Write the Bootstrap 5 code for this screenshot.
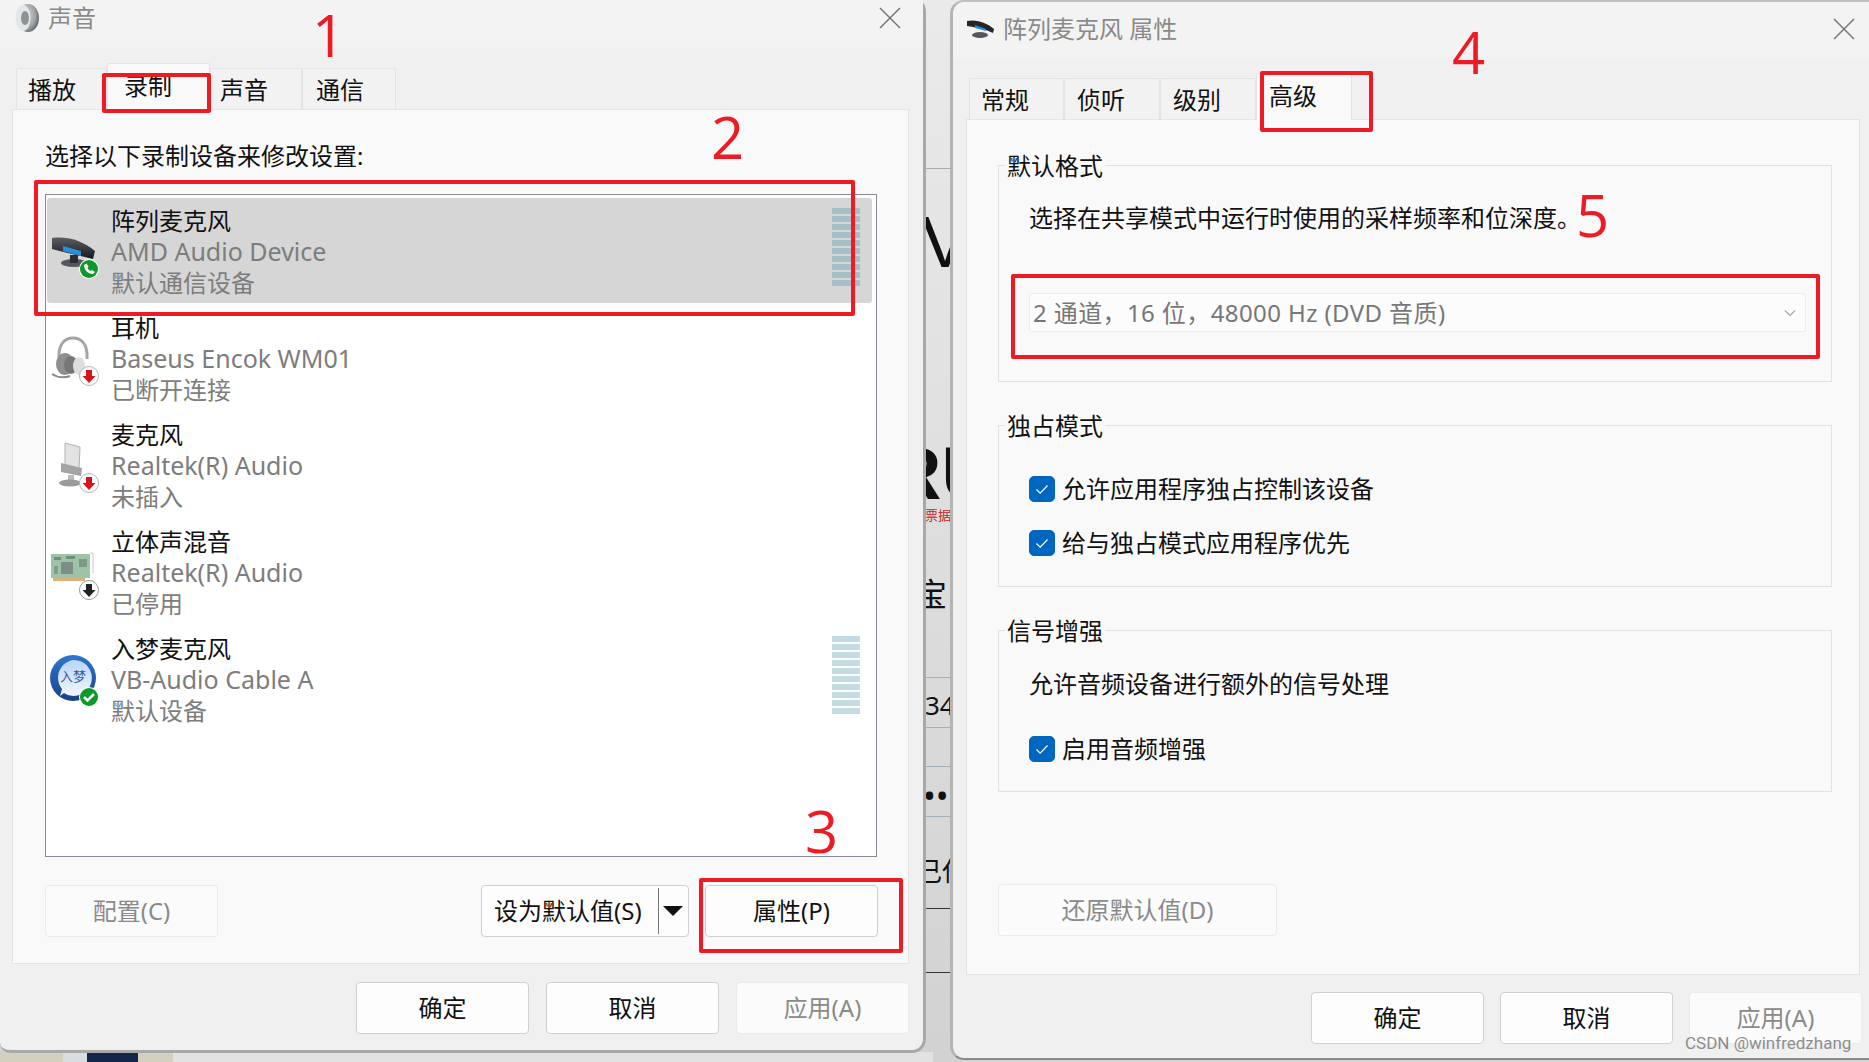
<!doctype html>
<html lang="zh-CN">
<head>
<meta charset="utf-8">
<title>声音</title>
<link href="https://cdn.jsdelivr.net/npm/bootstrap@5.3.0/dist/css/bootstrap.min.css" rel="stylesheet">
<style>
html,body{margin:0;height:100%;}
body{width:1869px;height:1062px;overflow:hidden;position:relative;background:#dfdfdf;font-family:"Noto Sans","Noto Sans CJK SC",sans-serif;font-size:24px;line-height:32px;color:#111;}
/* desktop behind the windows */
.snd-desk{position:absolute;inset:0;overflow:hidden;background:linear-gradient(#eaeaea,#d2d2d2);}
.snd-frag{position:absolute;white-space:nowrap;color:#111;}
.snd-rule{position:absolute;left:925px;width:26px;height:1px;background:#9fb0bb;}
.snd-rule-dark{background:#333;}
.snd-floor{position:absolute;top:1052px;height:10px;}
/* windows */
.snd-win{position:absolute;top:0;display:flex;flex-direction:column;background:#f0f0f0;}
.snd-win-a{left:0;width:926px;height:1053px;border-right:3px solid #a8a8a8;border-bottom:3px solid #a8a8a8;border-radius:0 10px 14px 10px;}
.snd-win-b{left:950px;width:919px;height:1060px;border-left:3px solid #b4b4b4;border-top:2px solid #c0c0c0;border-bottom:2px solid #8a8a8a;border-radius:14px 0 0 14px;}
.snd-head{flex:none;display:flex;align-items:center;background:#f3f3f3;color:#8a8a8a;}
.snd-win-a .snd-head{height:48px;padding:0 22px 12px 14px;}
.snd-win-b .snd-head{height:55px;padding:0 14px 2px 13px;border-top-left-radius:12px;}
.snd-close{margin-left:auto;}
/* tabs */
.snd-tabs{flex:none;border:0;align-items:flex-end;position:relative;z-index:1;}
.snd-win-a .snd-tabs{padding:15px 0 0 16px;}
.snd-win-b .snd-tabs{padding:16px 0 0 16px;}
.snd-tabs .nav-link{display:block;height:41px;line-height:41px;padding:0;color:#111;font-size:24px;background:#f2f2f2;border:1px solid #e4e4e4;border-bottom:0;border-radius:2px 2px 0 0;margin:0;}
.snd-tabs .nav-link.active{height:47px;line-height:44px;margin-bottom:-1px;background:#f9f9f9;color:#111;border-color:#e4e4e4;}
.snd-win-a .nav-item:nth-child(1) .nav-link{width:91px;padding-left:11px;}
.snd-win-a .nav-item:nth-child(2) .nav-link{width:103px;padding-left:16px;}
.snd-win-a .nav-item:nth-child(3) .nav-link{width:92px;padding-left:9px;}
.snd-win-a .nav-item:nth-child(4) .nav-link{width:94px;padding-left:13px;}
.snd-win-b .nav-item:nth-child(1) .nav-link{width:95px;padding-left:11px;}
.snd-win-b .nav-item:nth-child(2) .nav-link{width:96px;padding-left:12px;}
.snd-win-b .nav-item:nth-child(3) .nav-link{width:96px;padding-left:12px;}
.snd-win-b .nav-item:nth-child(4) .nav-link{width:96px;padding-left:12px;}
/* panels */
.snd-panel{background:#f9f9f9;border:1px solid #e4e4e4;}
.snd-panel-a{margin:0 14px 0 12px;height:855px;padding:30px 0 0 32px;}
.snd-panel-b{margin:0 9px 0 13px;height:856px;padding:45px 0 0 31px;}
.snd-prompt{height:32px;margin-bottom:22px;}
.snd-listbox{width:832px;height:663px;background:#fff;border:1px solid #8b8b97;border-radius:0;padding:3px 4px 0 1px;gap:2px;overflow:visible;}
.snd-item{height:105px;display:flex;padding:0 0 0 3px;border:0;background:transparent;border-radius:3px!important;margin:0;color:#111;}
.snd-item.active{background:#d6d6d6;color:#111;}
.snd-item svg.snd-ico{flex:none;width:54px;height:60px;margin:30px 7px 0 0;overflow:visible;}
.snd-lines{padding-top:7px;}
.snd-lines div{line-height:32px;height:32px;white-space:nowrap;}
.snd-lines div+div{color:#7d7d7d;}
.snd-lines div:nth-child(2){height:30px;line-height:28px;font-size:25px;}
.snd-meter{margin:10px 12px 0 auto;width:28px;height:78px;display:flex;flex-direction:column;gap:2px;}
.snd-meter i{display:block;flex:1;background:#c3dbe2;}
.snd-item.active .snd-meter i{background:#a7bfc6;}
/* buttons */
.snd-btn{font-size:24px;line-height:32px;height:52px;padding:0;border:1px solid #d0d0d0;border-radius:4px;background:#fdfdfd;color:#111;text-align:center;}
.snd-btn:disabled,.snd-btn.disabled{background:#fbfbfb;border-color:#ebebeb;color:#8a8a8a;opacity:1;}
.snd-w173{width:173px;}
.snd-cfg{margin-top:28px;padding-right:30px;}
.snd-split{width:208px;display:flex;align-items:center;padding:0 0 0 12px;}
.snd-split-bar{width:1px;height:46px;background:#777;margin-left:auto;}
.snd-caret{width:0;height:0;border-left:10px solid transparent;border-right:10px solid transparent;border-top:10px solid #111;margin:0 5px 0 4px;}
.snd-foot{flex:none;}
.snd-win-a .snd-foot{padding:18px 14px 0 0;gap:17px;}
.snd-win-b .snd-foot{padding:17px 7px 0 0;gap:16px;}
/* group boxes */
.snd-group{width:834px;border:1px solid #e2e2e2;padding:0 0 0 30px;margin-bottom:43px;}
.snd-gh1{height:217px;}
.snd-gh2{height:162px;}
.snd-legend{display:block;width:max-content;height:32px;margin:-16px 0 0 -24px;padding:0 2px;background:#f9f9f9;}
.snd-para{height:32px;margin-top:20px;white-space:nowrap;}
.snd-para-b{margin-top:21px;}
.snd-select{width:777px;height:39px;margin-top:59px;padding:0 0 0 3px;font-size:24px;line-height:37px;letter-spacing:.4px;color:#777;background-color:#fcfcfc;border:1px solid #ececec;border-radius:3px;background-position:right 8px center;background-size:14px 14px;background-image:url("data:image/svg+xml,%3csvg xmlns='http://www.w3.org/2000/svg' viewBox='0 0 14 14'%3e%3cpath fill='none' stroke='%23666' d='M2 4.500l5 5 5-5'/%3e%3c/svg%3e");}
.snd-check{margin:0;padding:0;min-height:0;display:flex;align-items:center;gap:7px;height:32px;}
.snd-check-a{margin-top:31px;}
.snd-check-b{margin-top:22px;}
.snd-check-c{margin-top:33px;}
.snd-check .form-check-input:checked{width:26px;height:26px;margin:0;float:none;flex:none;border-radius:5px;background-color:#0067c0;border-color:#0067c0;background-size:18px 18px;background-image:url("data:image/svg+xml,%3csvg xmlns='http://www.w3.org/2000/svg' viewBox='0 0 18 18'%3e%3cpath fill='none' stroke='%23fff' stroke-width='1.200' d='M3.500 9.500l3.700 3.600 7.300-7.600'/%3e%3c/svg%3e");}
.snd-check .form-check-label{color:#111;}
.snd-reset{width:279px;margin-top:92px;}
/* annotations */
.snd-box{position:absolute;border:4px solid #ed1c24;border-radius:2px;z-index:5;pointer-events:none;}
.snd-num{position:absolute;z-index:5;color:#ed1c24;font-family:"Open Sans",sans-serif;font-size:58px;line-height:58px;}
.snd-mark{position:absolute;z-index:6;left:1685px;top:1033px;font-family:"Roboto",sans-serif;font-size:17px;line-height:20px;color:#8d8d8d;white-space:nowrap;}
</style>
</head>
<body>
<div class="snd-desk">
  <div class="snd-frag" style="left:921px;top:206px;font-family:'Liberation Sans';font-size:72px;line-height:72px;">V</div>
  <div class="snd-rule" style="top:168px;background:#aaa;"></div>
  <div class="snd-frag" style="left:888px;top:444px;font-family:'Liberation Sans';font-weight:700;font-size:74px;line-height:60px;">RU</div>
  <div class="snd-frag" style="left:925px;top:508px;font-size:13px;line-height:14px;color:#c4262e;font-family:'Noto Sans CJK SC';">票据</div>
  <div class="snd-frag" style="left:915px;top:574px;font-family:'Noto Sans CJK SC';font-size:32px;line-height:36px;">宝</div>
  <div class="snd-rule" style="top:677px;"></div>
  <div class="snd-frag" style="left:925px;top:689px;font-size:26px;">34</div>
  <div class="snd-rule" style="top:727px;"></div>
  <div class="snd-rule" style="top:766px;"></div>
  <div class="snd-frag" style="left:923px;top:775px;font-size:34px;line-height:40px;">••</div>
  <div class="snd-rule" style="top:816px;"></div>
  <div class="snd-frag" style="left:916px;top:854px;font-family:'Noto Sans CJK SC';font-size:26px;">己任</div>
  <div class="snd-rule snd-rule-dark" style="top:908px;"></div>
  <div class="snd-rule snd-rule-dark" style="top:972px;"></div>
  <div class="snd-floor" style="left:0;width:63px;background:#d3d0c0;"></div>
  <div class="snd-floor" style="left:63px;width:24px;background:#d8dde0;"></div>
  <div class="snd-floor" style="left:87px;width:51px;background:#14264a;"></div>
  <div class="snd-floor" style="left:138px;width:35px;background:#d3d0c0;"></div>
  <div class="snd-floor" style="left:173px;width:760px;background:#e2e2e2;"></div>
</div>

<!-- left window -->
<div class="snd-win snd-win-a">
  <div class="snd-head">
    <svg width="26" height="30" viewBox="0 0 26 30" class="me-2"><defs><radialGradient id="spk" cx=".35" cy=".4" r=".8"><stop offset="0" stop-color="#dfe3e5"/><stop offset=".6" stop-color="#9ea3a6"/><stop offset="1" stop-color="#3c3f42"/></radialGradient></defs><ellipse cx="14" cy="15" rx="11" ry="14" fill="url(#spk)"/><ellipse cx="9" cy="15" rx="7.500" ry="13" fill="#e4e7e9"/><ellipse cx="11" cy="15" rx="4" ry="7" fill="#8d9295"/></svg>
    <span>声音</span>
    <svg class="snd-close" width="22" height="22" viewBox="0 0 22 22"><path d="M1 1l20 20M21 1L1 21" stroke="#777" stroke-width="1.500" fill="none"/></svg>
  </div>
  <ul class="nav nav-tabs snd-tabs">
    <li class="nav-item"><a class="nav-link" href="#">播放</a></li>
    <li class="nav-item"><a class="nav-link active" href="#">录制</a></li>
    <li class="nav-item"><a class="nav-link" href="#">声音</a></li>
    <li class="nav-item"><a class="nav-link" href="#">通信</a></li>
  </ul>
  <div class="snd-panel snd-panel-a">
    <div class="snd-prompt">选择以下录制设备来修改设置:</div>
    <div class="list-group snd-listbox">
      <div class="list-group-item snd-item active">
        <svg class="snd-ico" viewBox="0 0 54 60"><defs><linearGradient id="cam" x1="0" y1="0" x2="0" y2="1"><stop offset="0" stop-color="#5a5e63"/><stop offset="1" stop-color="#16181b"/></linearGradient></defs><ellipse cx="24" cy="35" rx="13" ry="4" fill="#55585c"/><rect x="20" y="27" width="8" height="8" fill="#2b2d30"/><path d="M2 10c14-2 30 2 43 13l-2 8C30 28 14 24 2 21z" fill="url(#cam)"/><path d="M13 18l18 5v5l-18-5z" fill="#2a8fd8"/><circle cx="39" cy="41" r="10" fill="#fff"/><circle cx="39" cy="41" r="9" fill="#0a9a2a"/><path d="M34 37c0 5 4 9 9 9l2-2-3-2-1.500 1c-1.500-.8-2.500-1.800-3-3l1-1.500-2-3z" fill="#fff"/></svg>
        <div class="snd-lines"><div>阵列麦克风</div><div>AMD Audio Device</div><div>默认通信设备</div></div>
        <div class="snd-meter"><i></i><i></i><i></i><i></i><i></i><i></i><i></i><i></i><i></i><i></i></div>
      </div>
      <div class="list-group-item snd-item">
        <svg class="snd-ico" viewBox="0 0 54 60"><path d="M9 24C8 10 14 3 23 3s15 7 14 21" fill="none" stroke="#a5a5a5" stroke-width="3"/><ellipse cx="15" cy="29" rx="9" ry="11" fill="#8f8f8f"/><ellipse cx="21" cy="30" rx="7" ry="9" fill="#777"/><ellipse cx="29" cy="31" rx="6" ry="9" fill="#dedede"/><path d="M2 39c6 4 12 4 18 2" fill="none" stroke="#888" stroke-width="2"/><circle cx="39" cy="41" r="9.500" fill="#fff" stroke="#b5b5b5"/><path d="M36 35h6v6h3.500L39 48l-6.500-7H36z" fill="#d8131b"/></svg>
        <div class="snd-lines"><div>耳机</div><div>Baseus Encok WM01</div><div>已断开连接</div></div>
      </div>
      <div class="list-group-item snd-item">
        <svg class="snd-ico" viewBox="0 0 54 60"><path d="M15 1l15 4-1 23-14-3z" fill="#e3e3e3" stroke="#b3b3b3"/><path d="M11 21l21 5-1 8-20-4z" fill="#a4a4a4"/><rect x="18" y="33" width="6" height="6" fill="#bdbdbd"/><ellipse cx="20" cy="41" rx="11" ry="3.500" fill="#9a9a9a"/><circle cx="39" cy="41" r="9.500" fill="#fff" stroke="#b5b5b5"/><path d="M36 35h6v6h3.500L39 48l-6.500-7H36z" fill="#d8131b"/></svg>
        <div class="snd-lines"><div>麦克风</div><div>Realtek(R) Audio</div><div>未插入</div></div>
      </div>
      <div class="list-group-item snd-item">
        <svg class="snd-ico" viewBox="0 0 54 60"><path d="M40 4h3v20" fill="none" stroke="#c8c8c8"/><rect x="1" y="5" width="39" height="24" fill="#9fc3a6"/><rect x="11" y="13" width="12" height="12" fill="#7d8f85"/><rect x="4" y="8" width="7" height="3" fill="#6f8f78"/><rect x="16" y="7" width="9" height="3" fill="#6f8f78"/><rect x="29" y="10" width="8" height="8" fill="#7d9a86"/><rect x="4" y="17" width="4" height="8" fill="#7f9f88"/><rect x="3" y="29" width="32" height="3" fill="#d9b07e"/><circle cx="39" cy="41" r="9.500" fill="#fff" stroke="#9a9a9a"/><path d="M36 35h6v6h3.500L39 48l-6.500-7H36z" fill="#222"/></svg>
        <div class="snd-lines"><div>立体声混音</div><div>Realtek(R) Audio</div><div>已停用</div></div>
      </div>
      <div class="list-group-item snd-item">
        <svg class="snd-ico" viewBox="0 0 54 60"><defs><linearGradient id="ring" x1="0" y1="0" x2="0" y2="1"><stop offset="0" stop-color="#2d78cf"/><stop offset="1" stop-color="#1c3f8a"/></linearGradient><linearGradient id="bub" x1="0" y1="0" x2="0" y2="1"><stop offset="0" stop-color="#b8d4f5"/><stop offset="1" stop-color="#f2f7fd"/></linearGradient></defs><circle cx="23" cy="22" r="23" fill="url(#ring)"/><path d="M23 4a18 18 0 1 1-9 33l-4 3 2-7A18 18 0 0 1 23 4z" fill="url(#bub)"/><text x="23" y="25" text-anchor="middle" font-family="Noto Sans CJK SC" font-size="13" fill="#2d5aa0">入梦</text><circle cx="39" cy="41" r="10" fill="#fff"/><circle cx="39" cy="41" r="9" fill="#0a9a2a"/><path d="M34 41l3.500 3.500 6.500-6.500" fill="none" stroke="#fff" stroke-width="2.500"/></svg>
        <div class="snd-lines"><div>入梦麦克风</div><div>VB-Audio Cable A</div><div>默认设备</div></div>
        <div class="snd-meter"><i></i><i></i><i></i><i></i><i></i><i></i><i></i><i></i><i></i><i></i></div>
      </div>
    </div>
    <div class="d-flex snd-cfg">
      <button class="btn snd-btn snd-w173" disabled>配置(C)</button>
      <div class="btn snd-btn snd-split ms-auto"><span>设为默认值(S)</span><span class="snd-split-bar"></span><span class="snd-caret"></span></div>
      <button class="btn snd-btn snd-w173 ms-3">属性(P)</button>
    </div>
  </div>
  <div class="d-flex justify-content-end snd-foot">
    <button class="btn snd-btn snd-w173">确定</button>
    <button class="btn snd-btn snd-w173">取消</button>
    <button class="btn snd-btn snd-w173" disabled>应用(A)</button>
  </div>
</div>

<!-- right window -->
<div class="snd-win snd-win-b">
  <div class="snd-head">
    <svg width="29" height="22" viewBox="0 0 29 22" class="me-2"><path d="M1 3c10-2 20 2 27 8l-1 4C19 11 9 9 1 8z" fill="#23262a"/><path d="M9 7l11 4v2L9 10z" fill="#2a8fd8"/><ellipse cx="14" cy="17" rx="8" ry="3" fill="#55585c"/></svg>
    <span>阵列麦克风 属性</span>
    <svg class="snd-close" width="22" height="22" viewBox="0 0 22 22"><path d="M1 1l20 20M21 1L1 21" stroke="#777" stroke-width="1.500" fill="none"/></svg>
  </div>
  <ul class="nav nav-tabs snd-tabs">
    <li class="nav-item"><a class="nav-link" href="#">常规</a></li>
    <li class="nav-item"><a class="nav-link" href="#">侦听</a></li>
    <li class="nav-item"><a class="nav-link" href="#">级别</a></li>
    <li class="nav-item"><a class="nav-link active" href="#">高级</a></li>
  </ul>
  <div class="snd-panel snd-panel-b">
    <div class="snd-group snd-gh1">
      <span class="snd-legend">默认格式</span>
      <div class="snd-para">选择在共享模式中运行时使用的采样频率和位深度。</div>
      <select class="form-select snd-select"><option>2 通道，16 位，48000 Hz (DVD 音质)</option></select>
    </div>
    <div class="snd-group snd-gh2">
      <span class="snd-legend">独占模式</span>
      <div class="form-check snd-check snd-check-a"><input class="form-check-input" type="checkbox" checked id="c1"><label class="form-check-label" for="c1">允许应用程序独占控制该设备</label></div>
      <div class="form-check snd-check snd-check-b"><input class="form-check-input" type="checkbox" checked id="c2"><label class="form-check-label" for="c2">给与独占模式应用程序优先</label></div>
    </div>
    <div class="snd-group snd-gh2 mb-0">
      <span class="snd-legend">信号增强</span>
      <div class="snd-para snd-para-b">允许音频设备进行额外的信号处理</div>
      <div class="form-check snd-check snd-check-c"><input class="form-check-input" type="checkbox" checked id="c3"><label class="form-check-label" for="c3">启用音频增强</label></div>
    </div>
    <button class="btn snd-btn snd-reset d-block" disabled>还原默认值(D)</button>
  </div>
  <div class="d-flex justify-content-end snd-foot">
    <button class="btn snd-btn snd-w173">确定</button>
    <button class="btn snd-btn snd-w173">取消</button>
    <button class="btn snd-btn snd-w173" disabled>应用(A)</button>
  </div>
</div>

<!-- red annotations -->
<div class="snd-box" style="left:102px;top:73px;width:109px;height:40px;"></div>
<div class="snd-box" style="left:34px;top:180px;width:821px;height:136px;"></div>
<div class="snd-box" style="left:699px;top:878px;width:204px;height:75px;"></div>
<div class="snd-box" style="left:1260px;top:71px;width:113px;height:61px;"></div>
<div class="snd-box" style="left:1011px;top:274px;width:809px;height:85px;"></div>
<div class="snd-num" style="left:312px;top:6px;">1</div>
<div class="snd-num" style="left:711px;top:108px;">2</div>
<div class="snd-num" style="left:805px;top:802px;">3</div>
<div class="snd-num" style="left:1452px;top:23px;">4</div>
<div class="snd-num" style="left:1576px;top:186px;">5</div>
<div class="snd-mark">CSDN @winfredzhang</div>
</body>
</html>
